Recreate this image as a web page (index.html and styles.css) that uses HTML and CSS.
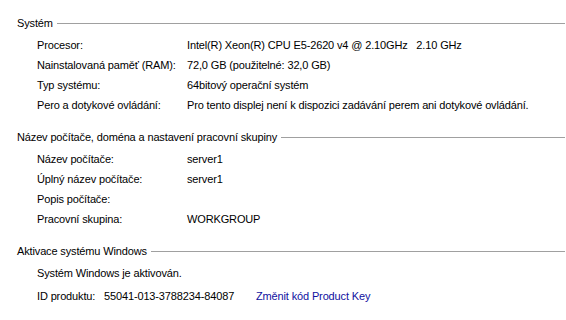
FILE: index.html
```html
<!doctype html>
<html lang="cs">
    <head>
        <meta charset="UTF-8" />
        <title>Systém</title>
        <link rel="stylesheet" href="styles.css">
    </head>
    <body>
        <div class="section">
            <div class="section-title"><span>Systém</span></div>
            <div class="rows">
                <div class="row"><span>Procesor:</span><span>Intel(R) Xeon(R) CPU E5-2620 v4 @ 2.10GHz &nbsp; 2.10 GHz</span></div>
                <div class="row"><span>Nainstalovaná paměť (RAM):</span><span>72,0 GB (použitelné: 32,0 GB)</span></div>
                <div class="row"><span>Typ systému:</span><span>64bitový operační systém</span></div>
                <div class="row"><span>Pero a dotykové ovládání:</span><span>Pro tento displej není k dispozici zadávání perem ani dotykové ovládání.</span></div>
            </div>
        </div>
        <div class="section">
            <div class="section-title"><span>Název počítače, doména a nastavení pracovní skupiny</span></div>
            <div class="rows">
                <div class="row"><span>Název počítače:</span><span>server1</span></div>
                <div class="row"><span>Úplný název počítače:</span><span>server1</span></div>
                <div class="row"><span>Popis počítače:</span><span></span></div>
                <div class="row"><span>Pracovní skupina:</span><span>WORKGROUP</span></div>
            </div>
        </div>
        <div class="section">
            <div class="section-title"><span>Aktivace systému Windows</span></div>
            <div class="rows">
                <div class="row single">Systém Windows je aktivován.</div>
                <div class="row product">
                    <span>ID produktu:</span>
                    <span>55041-013-3788234-84087</span>
                    <a href="#">Změnit kód Product Key</a>
                </div>
            </div>
        </div>
    </body>
</html>
```

FILE: styles.css
```css
body {
    margin: 0;
    padding-top: 13px;
    font-family: "Liberation Sans", Arial, sans-serif;
    font-size: 11px;
    letter-spacing: -0.14px;
    color: #000;
    background-color: #fff;
    width: 566px;
    height: 320px;
    overflow: hidden;
}
.section {
    margin-bottom: 12px;
}
.section-title {
    display: flex;
    align-items: center;
    height: 20px;
    padding-left: 17px;
    padding-right: 1px;
    margin-bottom: 2px;
}
.section-title::after {
    content: "";
    flex: 1;
    height: 1px;
    margin-left: 4px;
    background-color: #a0a0a0;
}
.rows {
    padding-left: 37px;
}
.row {
    display: grid;
    grid-template-columns: 150px auto;
    height: 20px;
    line-height: 20px;
    white-space: nowrap;
}
.row.single {
    display: block;
    margin-bottom: 3px;
}
.row.product {
    grid-template-columns: 67px 152px auto;
}
.row a {
    color: #1010a0;
    text-decoration: none;
}
```
